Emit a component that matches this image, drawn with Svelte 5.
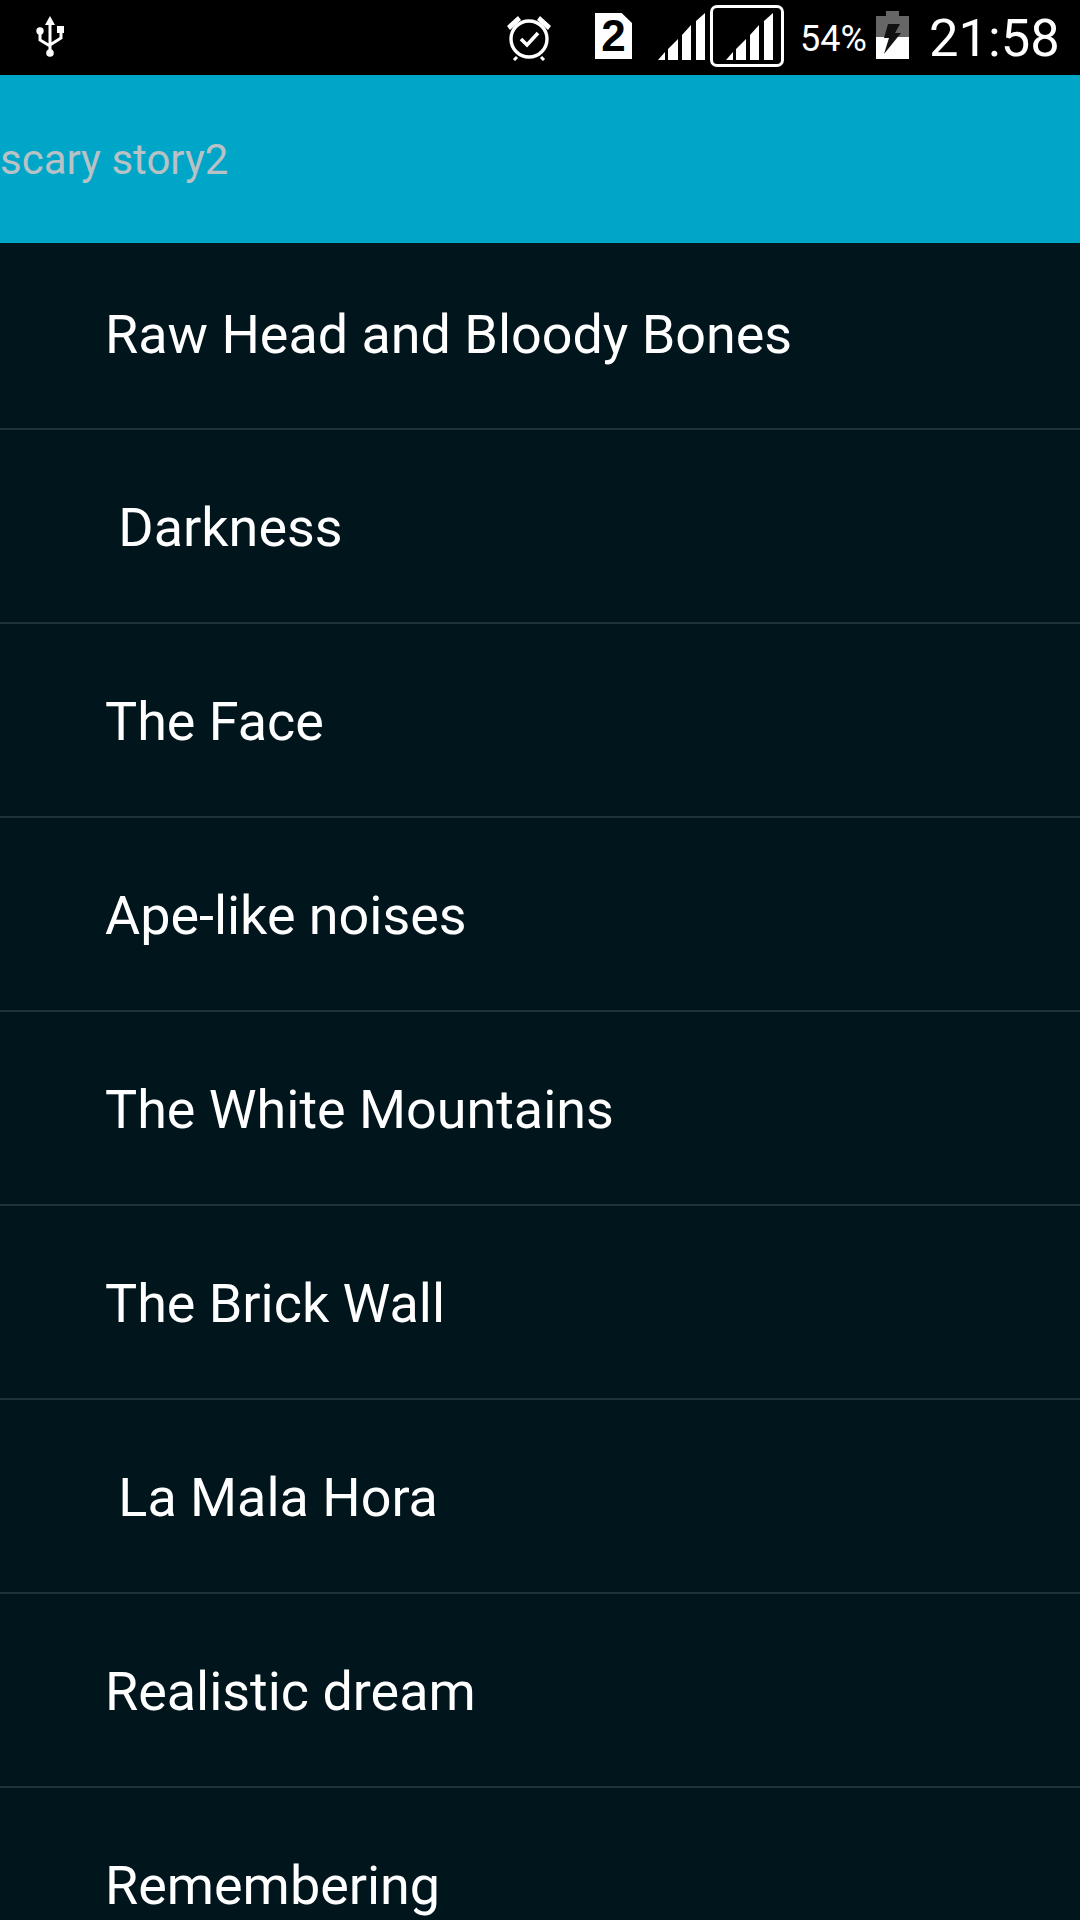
<script>
	const stories = [
		'Raw Head and Bloody Bones',
		' Darkness',
		'The Face',
		'Ape-like noises',
		'The White Mountains',
		'The Brick Wall',
		' La Mala Hora',
		'Realistic dream',
		'Remembering'
	];
</script>

<div class="screen">
	<div class="status-bar">
		<svg class="usb" viewBox="30 14 40 46" width="40" height="46">
			<path d="M50 16 L55 25 H45 Z" fill="#fff" />
			<path d="M50 22 V52 M40 31 V40 L50 46 M61 32 V38 L50 45" fill="none" stroke="#fff" stroke-width="3" />
			<circle cx="40" cy="31" r="3.7" fill="#fff" />
			<rect x="57" y="26" width="7" height="7" fill="#fff" />
			<circle cx="50" cy="53" r="3.8" fill="#fff" />
		</svg>

		<svg class="alarm" viewBox="0 0 46 48" width="46" height="48">
			<circle cx="23" cy="26" r="18" fill="none" stroke="#fff" stroke-width="3.4" />
			<path d="M1 13 L12 3 L15 7 L4 17 Z M45 13 L34 3 L31 7 L42 17 Z" fill="#fff" />
			<path d="M11 44 L8 47 M35 44 L38 47" stroke="#fff" stroke-width="3" />
			<path d="M15 26 L21 32 L32 20" fill="none" stroke="#fff" stroke-width="3.6" />
		</svg>

		<div class="sim">
			<span>2</span>
		</div>

		<svg class="signal" viewBox="0 0 49 47" width="49" height="47">
			<path d="M0 47 L7 39 V47 Z M10 36 L20 26 V47 H10 Z M24 22 L33 12 V47 H24 Z M38 8 L47 0 V47 H38 Z" fill="#fff" />
		</svg>

		<div class="sim-box">
			<svg viewBox="0 0 49 47" width="49" height="47">
				<path d="M0 47 L7 39 V47 Z M10 36 L20 26 V47 H10 Z M24 22 L33 12 V47 H24 Z M38 8 L47 0 V47 H38 Z" fill="#fff" />
			</svg>
		</div>

		<span class="percent">54%</span>

		<svg class="battery" viewBox="0 0 33 48" width="33" height="48">
			<path d="M10 0 H23 V5 H33 V26 H0 V5 H10 Z" fill="#666" />
			<rect x="0" y="26" width="33" height="22" fill="#fff" />
			<path d="M12 13 H24 L19 22 H25 L8 43 L13 27 H8 Z" fill="#111" />
		</svg>

		<span class="clock">21:58</span>
	</div>

	<header class="app-bar">
		<span>scary story2</span>
	</header>

	<ul class="list">
		{#each stories as story}
			<li>{story}</li>
		{/each}
	</ul>
</div>

<style>
	:global(body) {
		margin: 0;
		background: #01151d;
	}

	.screen {
		width: 1080px;
		height: 1920px;
		overflow: hidden;
		display: flex;
		flex-direction: column;
		font-family: Roboto, "Noto Sans", sans-serif;
		background: #01151d;
	}

	.status-bar {
		height: 75px;
		flex: none;
		background: #000;
		display: flex;
		align-items: center;
		color: #fff;
	}

	.usb {
		margin-left: 30px;
		margin-top: -1px;
	}

	.alarm {
		margin-left: 436px;
		margin-top: -2px;
	}

	.sim {
		margin-left: 43px;
		width: 37px;
		height: 46px;
		margin-top: -3px;
		background: #fff;
		clip-path: polygon(0 0, 72% 0, 100% 22%, 100% 100%, 0 100%);
		display: flex;
		align-items: center;
		justify-content: center;
	}

	.sim span {
		font-family: "Liberation Sans", sans-serif;
		font-weight: 700;
		font-size: 44px;
		line-height: 1;
		color: #000;
	}

	.signal {
		margin-left: 26px;
		margin-top: -2px;
	}

	.sim-box {
		margin-left: 3px;
		margin-top: -3px;
		width: 74px;
		height: 62px;
		box-sizing: border-box;
		border: 3px solid #fff;
		border-radius: 7px;
		padding: 5px 0 0 13px;
	}

	.sim-box svg {
		display: block;
	}

	.percent {
		margin-left: 16px;
		font-size: 36px;
		width: 65px;
		margin-top: 2px;
	}

	.battery {
		margin-left: 11px;
		margin-top: -5px;
	}

	.clock {
		margin-left: 20px;
		font-size: 52.5px;
		margin-top: 1px;
	}

	.app-bar {
		height: 168px;
		flex: none;
		background: #00a6c7;
		color: #b8c1c5;
		font-size: 42px;
		display: flex;
		align-items: center;
	}

	.list {
		list-style: none;
		margin: 0;
		padding: 0;
	}

	.list li {
		box-sizing: border-box;
		height: 194px;
		border-bottom: 2px solid #1f3139;
		padding: 3px 0 0 105px;
		display: flex;
		align-items: center;
		white-space: pre;
		color: #fff;
		font-size: 53.9px;
	}

	.list li:first-child {
		height: 187px;
		padding: 0 0 2px 105px;
	}
</style>
